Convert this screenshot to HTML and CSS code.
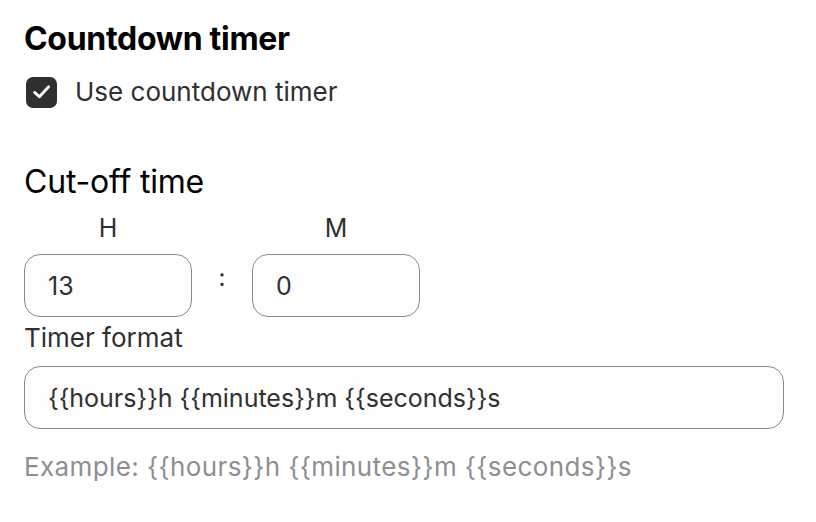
FILE: index.html
```html
<!DOCTYPE html>
<html>
<head>
<meta charset="utf-8">
<link rel="stylesheet" href="styles.css">
</head>
<body>
<div class="panel">
  <h2 class="title">Countdown timer</h2>
  <label class="check">
    <span class="box"><svg width="22" height="22" viewBox="0 0 22 22"><path d="M3.6 11.4 L8.4 15.8 L17.6 5.8" fill="none" stroke="#fff" stroke-width="2.8" stroke-linecap="round" stroke-linejoin="round"/></svg></span>
    <span class="check-label">Use countdown timer</span>
  </label>

  <div class="section-title">Cut-off time</div>
  <div class="time-row">
    <div class="time-col">
      <div class="time-head">H</div>
      <div class="field small"><span>13</span></div>
    </div>
    <div class="colon">:</div>
    <div class="time-col">
      <div class="time-head">M</div>
      <div class="field small"><span>0</span></div>
    </div>
  </div>

  <div class="label">Timer format</div>
  <div class="field wide"><span>{{hours}}h {{minutes}}m {{seconds}}s</span></div>
  <div class="help">Example: {{hours}}h {{minutes}}m {{seconds}}s</div>
</div>
</body>
</html>
```
FILE: styles.css
```css
html, body {
  margin: 0;
  padding: 0;
  background: #ffffff;
}
body {
  font-family: Inter, "Noto Sans", "Liberation Sans", sans-serif;
  color: #303030;
}
.panel {
  padding: 19px 24px 0 24px;
}
.title {
  margin: 0;
  font-size: 32px;
  font-weight: 700;
  line-height: 40px;
  color: #000;
  letter-spacing: -0.3px;
}
.check {
  display: flex;
  align-items: center;
  margin-top: 17px;
  margin-left: 2px;
}
.box {
  width: 31px;
  height: 31px;
  border-radius: 7px;
  background: #303030;
  display: flex;
  align-items: center;
  justify-content: center;
}
.check-label {
  margin-left: 18px;
  font-size: 26px;
  line-height: 32px;
  color: #303030;
}
.section-title {
  margin-top: 54px;
  font-size: 32px;
  line-height: 40px;
  color: #000;
  letter-spacing: -0.2px;
}
.time-row {
  display: flex;
  align-items: flex-end;
  margin-top: 11px;
}
.time-col {
  width: 168px;
  display: flex;
  flex-direction: column;
}
.time-head {
  text-align: center;
  font-size: 25px;
  line-height: 30px;
  color: #303030;
  margin-bottom: 11px;
}
.colon {
  width: 60px;
  text-align: center;
  font-size: 24px;
  line-height: 30px;
  margin-bottom: 24px;
  color: #303030;
}
.field {
  box-sizing: border-box;
  height: 63px;
  border: 1.5px solid #8a8a8a;
  border-radius: 16px;
  background: #fdfdfd;
  display: flex;
  align-items: center;
  padding-left: 23px;
  font-size: 25px;
  color: #303030;
}
.field.small {
  width: 168px;
}
.field.wide {
  width: 760px;
  margin-top: 12px;
}
.label {
  margin-top: 5px;
  font-size: 26px;
  line-height: 32px;
  color: #303030;
}
.help {
  margin-top: 22px;
  font-size: 26px;
  line-height: 32px;
  letter-spacing: 0.4px;
  color: #8e8e93;
}
```
